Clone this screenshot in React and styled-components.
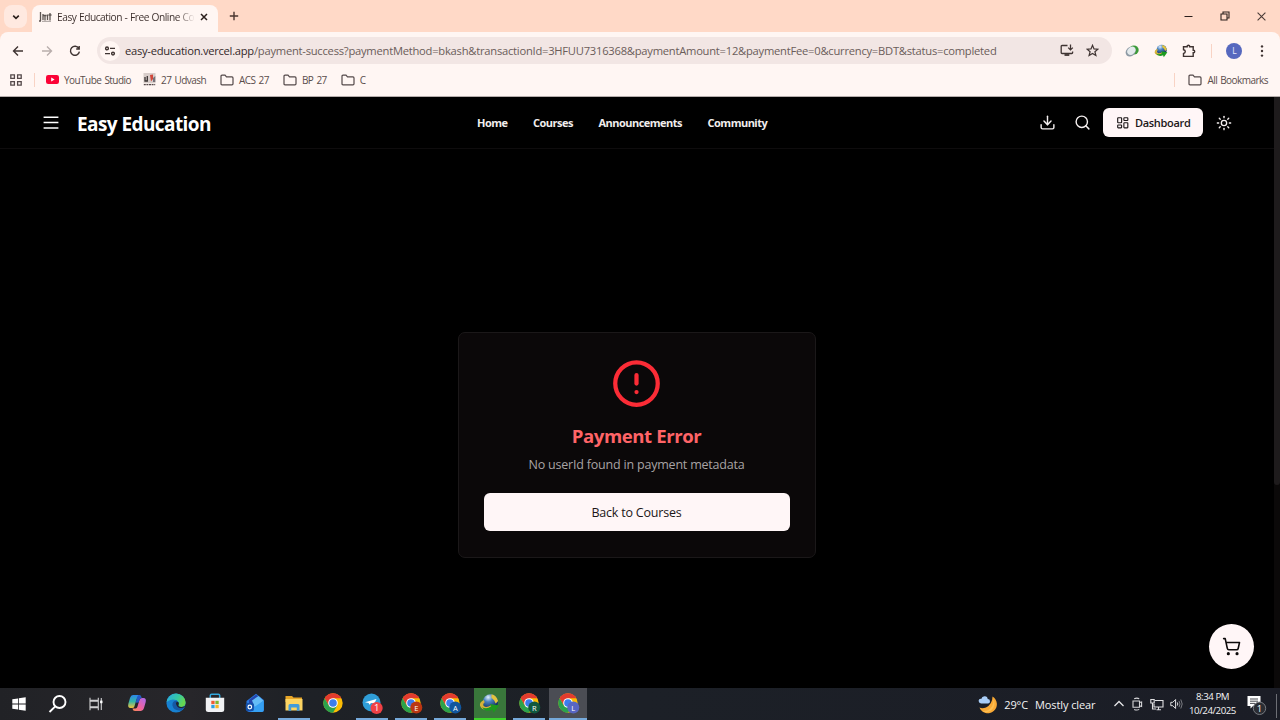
import React from "react";
import styled, { createGlobalStyle, css } from "styled-components";
import { Download, Search, LayoutDashboard, Sun, ShoppingCart, CircleAlert } from "lucide-react";

const Global = createGlobalStyle`
  * { box-sizing: border-box; }
  html, body { margin: 0; padding: 0; overflow: hidden; background: #000; }
  body { font-family: "Open Sans", "Noto Sans", sans-serif; }
  svg { display: block; flex: none; }
  button { font: inherit; border: 0; padding: 0; background: none; }
`;

const Screen = styled.div`
  width: 1280px;
  height: 720px;
  display: flex;
  flex-direction: column;
`;

/* ---------- Browser window ---------- */
const TabStrip = styled.div`
  height: 32px;
  flex: none;
  display: flex;
  align-items: flex-end;
  background: #ffd9c7;
`;
const TabSearch = styled.button`
  width: 23px;
  height: 23px;
  margin: 0 5px 4px 4px;
  border-radius: 8px;
  background: #ffe9e0;
  display: grid;
  place-items: center;
`;
const Tab = styled.div`
  width: 186px;
  height: 27px;
  padding: 0 9px 3px 6px;
  display: flex;
  align-items: center;
  border-radius: 8px 8px 0 0;
  background: #fff6f3;
`;
const TabTitle = styled.div`
  width: 138px;
  margin: 0 5px;
  white-space: nowrap;
  font-size: 10.2px;
  letter-spacing: -0.47px;
  word-spacing: 0.4px;
  line-height: 16px;
  background: linear-gradient(90deg, #3a2d2a 120px, #3a2d2a00 138px);
  background-clip: text;
  color: transparent;
`;
const NewTab = styled.div`
  height: 32px;
  padding-left: 11px;
  display: flex;
  align-items: center;
`;
const WindowControls = styled.div`
  height: 32px;
  margin-left: auto;
  padding-right: 14px;
  display: flex;
  align-items: center;
  gap: 27px;
`;
const ToolbarBack = styled.div`
  background: #ffd9c7;
`;
const Toolbar = styled.div`
  height: 37px;
  padding: 0 13px 0 12px;
  display: flex;
  align-items: center;
  background: #fff6f3;
  border-radius: 8px 8px 0 0;
`;
const NavButtons = styled.div`
  width: 85px;
  display: flex;
  gap: 16.5px;
`;
const Omnibox = styled.div`
  width: 1015px;
  height: 27px;
  padding: 0 13px 0 3px;
  display: flex;
  align-items: center;
  border-radius: 14px;
  background: #f2e6e4;
`;
const SiteInfo = styled.div`
  width: 20px;
  height: 20px;
  margin-right: 5px;
  border-radius: 50%;
  display: grid;
  place-items: center;
  background: #fff6f3;
`;
const Url = styled.div`
  flex: 1;
  white-space: nowrap;
  font-size: 11.2px;
  letter-spacing: -0.24px;
  color: #6b5d5a;
`;
const Domain = styled.span`
  color: #33282a;
  letter-spacing: -0.27px;
`;
const OmniActions = styled.div`
  display: flex;
  gap: 12px;
`;
const Extensions = styled.div`
  flex: 1;
  display: flex;
  align-items: center;
  justify-content: space-between;
  padding-left: 13px;
`;
const Divider = styled.span`
  flex: none;
  width: 1px;
  height: 14px;
  background: #f8d3c4;
`;
const Avatar = styled.div`
  width: 16px;
  height: 16px;
  border-radius: 50%;
  display: grid;
  place-items: center;
  background: #5668be;
  color: #e6e9ff;
  font-size: 8.5px;
  line-height: 16px;
`;
const BookmarksBar = styled.div`
  height: 28px;
  padding: 0 12px 6px 10px;
  display: flex;
  align-items: center;
  background: #fff6f3;
  border-bottom: 1px solid #b5adab;
`;
const Bookmark = styled.div`
  display: flex;
  align-items: center;
  gap: 5px;
  margin-right: ${(p) => p.$after || 0}px;
  font-size: 10px;
  line-height: 14px;
  letter-spacing: -0.54px;
  word-spacing: 1px;
  white-space: nowrap;
  color: #5a4d4b;
`;
const AppsShortcut = styled.div`
  display: flex;
  align-items: center;
  gap: 12px;
  margin-right: 11px;
`;
const AllBookmarks = styled.div`
  margin-left: auto;
  display: flex;
  align-items: center;
  gap: 13px;
`;

/* ---------- Site ---------- */
const Viewport = styled.div`
  flex: 1;
  display: flex;
  min-height: 0;
  background: #000;
`;
const Page = styled.div`
  position: relative;
  flex: 1;
  display: flex;
  flex-direction: column;
`;
const ScrollTrack = styled.div`
  width: 6px;
  background: #0b0909;
`;
const ScrollThumb = styled.div`
  width: 6px;
  height: 388px;
  background: #1e1b1c;
  border-radius: 0 0 3px 3px;
`;
const Header = styled.header`
  height: 52px;
  flex: none;
  padding: 0 42px 0 43px;
  display: flex;
  align-items: center;
  color: #fff;
  border-bottom: 1px solid #0e0c0d;
`;
const Brand = styled.div`
  width: 434px;
  display: flex;
  align-items: center;
  gap: 18px;
`;
const Logo = styled.h1`
  margin: 2px 0 0;
  font-size: 19px;
  font-weight: 700;
  line-height: 24px;
  letter-spacing: -0.58px;
`;
const Nav = styled.nav`
  display: flex;
  gap: 25.6px;
`;
const NavLink = styled.a`
  font-size: 11px;
  font-weight: 700;
  letter-spacing: -0.52px;
  line-height: 16px;
  color: #f1eded;
`;
const HeaderActions = styled.div`
  margin-left: auto;
  display: flex;
  align-items: center;
  gap: 18px;
  color: #f5f0f0;
`;
const DashboardButton = styled.button`
  width: 100px;
  height: 29px;
  margin: 0 -5px 0 -6px;
  display: flex;
  align-items: center;
  justify-content: center;
  gap: 6px;
  border-radius: 6px;
  background: #fff6f7;
  color: #1c1718;
  font-size: 11px;
  font-weight: 600;
  letter-spacing: -0.33px;
`;
const Main = styled.main`
  flex: 1;
  display: flex;
  justify-content: center;
  align-items: flex-start;
  padding: 183px 1px 0 0;
`;
const Card = styled.section`
  width: 358px;
  height: 226px;
  padding: 25px 25px;
  display: flex;
  flex-direction: column;
  align-items: center;
  border: 1px solid #1b1819;
  border-radius: 7px;
  background: #0b0809;
`;
const CardTitle = styled.h2`
  margin: 14px 0 0;
  font-size: 18.6px;
  font-weight: 700;
  line-height: 26px;
  letter-spacing: -0.42px;
  color: #ff6467;
`;
const CardText = styled.p`
  margin: 7px 0 0;
  font-size: 12.5px;
  line-height: 18px;
  letter-spacing: -0.2px;
  color: #a8a3a4;
`;
const CardButton = styled.button`
  width: 100%;
  height: 38px;
  margin-top: 19px;
  border-radius: 6px;
  background: #fff6f7;
  color: #1c1718;
  font-size: 12.5px;
  letter-spacing: -0.2px;
`;
const CartButton = styled.button`
  position: absolute;
  right: 20px;
  bottom: 19px;
  width: 45px;
  height: 45px;
  border-radius: 50%;
  display: grid;
  place-items: center;
  background: #fff6f7;
  color: #0c090a;
`;

/* ---------- Taskbar ---------- */
const Taskbar = styled.footer`
  height: 32px;
  flex: none;
  display: flex;
  background: linear-gradient(90deg, #212226 0, #27262a 190px, #1e2126 300px, #1c2027 640px, #1b1d26 1280px);
  color: #f3f3f3;
`;
const SystemButton = styled.div`
  width: 38.4px;
  display: grid;
  place-items: center;
`;
const TaskList = styled.div`
  display: flex;
  margin-left: 2.2px;
`;
const TaskSlot = styled.div`
  width: 39.2px;
  display: flex;
  justify-content: center;
`;
const AppTile = styled.div`
  width: 32px;
  display: grid;
  place-items: center;
  border-bottom: 2px solid transparent;
  ${(p) => p.$state === "open" && css`border-color: #76a9da;`}
  ${(p) => p.$state === "active" && css`
    width: 38px;
    flex: none;
    background: #4b4d54;
    border-color: #76a9da;
  `}
  ${(p) => p.$state === "busy" && css`
    background: #39773b;
    border-color: #3fd32c;
  `}
`;
const Tray = styled.div`
  margin-left: auto;
  display: flex;
  align-items: center;
`;
const Weather = styled.div`
  display: flex;
  align-items: center;
  gap: 7px;
  margin-right: 17px;
  font-size: 11px;
  letter-spacing: -0.1px;
`;
const TrayIcons = styled.div`
  display: flex;
  align-items: center;
  gap: 6.5px;
  margin-right: 6px;
`;
const Clock = styled.div`
  width: 47px;
  display: flex;
  flex-direction: column;
  align-items: center;
  font-size: 9.7px;
  line-height: 14px;
  letter-spacing: -0.45px;
  white-space: nowrap;
`;
const Notifications = styled.div`
  margin: 3px 0 0 11px;
  width: 33px;
`;

/* ---------- Drawings ---------- */
const Stroke = ({ w = 16, h = w, vb = `0 0 ${w} ${h}`, c = "#3f3432", sw = 1.4, children }) => (
  <svg width={w} height={h} viewBox={vb} fill="none" stroke={c} strokeWidth={sw}>{children}</svg>
);
const FolderIcon = () => (
  <Stroke w={14} h={12} c="#54494a" sw={1.2}>
    <path d="M1 2.2Q1 1.2 2 1.2H5L6.5 2.9H12Q13 2.9 13 3.9V9.8Q13 10.8 12 10.8H2Q1 10.8 1 9.8Z" />
  </Stroke>
);
const ChromeIcon = ({ badge, color }) => (
  <svg width="24" height="24" viewBox="0 0 24 24">
    <circle cx="12" cy="12" r="9.7" fill="#fbbc05" />
    <path d="M3.6 7.15A9.7 9.7 0 0 1 20.4 7.15H12L7.8 14.4Z" fill="#e33b2e" />
    <path d="M3.6 7.15L7.8 14.4 12 16.8 16.2 14.4 12 21.7A9.7 9.7 0 0 1 3.6 7.15Z" fill="#2ba24c" />
    <circle cx="12" cy="12" r="4.8" fill="#fff" />
    <circle cx="12" cy="12" r="3.8" fill="#3b7ded" />
    {badge && (
      <>
        <circle cx="17.3" cy="16.6" r="6" fill={color} />
        <text x="17.3" y="19.5" fontSize="7.5" textAnchor="middle" fill="#fff">{badge}</text>
      </>
    )}
  </svg>
);
const CopilotIcon = () => (
  <svg width="20" height="20" viewBox="0 0 20 20">
    <defs>
      <linearGradient id="cpA" x1="0" y1="0" x2="0" y2="1">
        <stop offset="0" stopColor="#2b87ea" /><stop offset=".5" stopColor="#35b6a6" /><stop offset="1" stopColor="#f4c33a" />
      </linearGradient>
      <linearGradient id="cpB" x1="1" y1="0" x2="0" y2="1">
        <stop offset="0" stopColor="#a86af0" /><stop offset=".55" stopColor="#ed62a0" /><stop offset="1" stopColor="#fb8d4e" />
      </linearGradient>
    </defs>
    <path d="M6 2H12Q14 2 14.6 4.6H11.5Q10 4.6 9.5 6.5L7.4 13.5Q7 15 5 15H3.5Q.5 15 1.3 11L3 5Q3.8 2 6 2Z" fill="url(#cpA)" />
    <path d="M14 18H8Q6 18 5.4 15.4H8.5Q10 15.4 10.5 13.5L12.6 6.5Q13 5 15 5H16.5Q19.5 5 18.7 9L17 15Q16.2 18 14 18Z" fill="url(#cpB)" />
    <path d="M12 2Q14 2 14.6 4.9Q12.9 5 12.6 6.5L11.7 9.5 8.5 9.7 9.5 6.5Q10.3 2 12 2Z" fill="#2457c5" />
  </svg>
);
const EdgeIcon = () => (
  <svg width="20" height="20" viewBox="0 0 20 20">
    <defs>
      <linearGradient id="edT" x1="0" y1="0" x2="1" y2=".4">
        <stop offset="0" stopColor="#2aa8e8" /><stop offset=".6" stopColor="#35c9a5" /><stop offset="1" stopColor="#67d64f" />
      </linearGradient>
    </defs>
    <circle cx="10" cy="10" r="9.6" fill="#1781d1" />
    <path d="M.5 9A9.6 9.6 0 0 1 19.6 9.3Q19.7 14 15 14 11.5 14 12.5 11.8 13.5 9.5 11 7.6 6 4.6.5 9Z" fill="url(#edT)" />
    <path d="M6.4 12.5Q6 8 10.6 7.4 13.5 9.3 12.5 11.6 11.4 14 15 14.2L18.6 13.5Q17.5 16 15.5 17.2 8 18.5 6.4 12.5Z" fill="#1558a5" />
    <path d="M9.9 9.9Q10.7 8.5 12.4 9.2 13.2 10.4 12.4 12 12 13.8 15.2 14.1 17.4 14 19 12.9L18.7 14.3Q10.8 17 9.9 9.9Z" fill="#202329" />
  </svg>
);
const StoreIcon = () => (
  <svg width="20" height="20" viewBox="0 0 20 20">
    <path d="M5.3 6V2.5Q5.3 1.2 6.6 1.2H13.4Q14.7 1.2 14.7 2.5V6" fill="none" stroke="#32a8dd" strokeWidth="1.5" />
    <path d="M.8 4.7H19.2V16.5Q19.2 19 16.7 19H3.3Q.8 19 .8 16.5Z" fill="#f1f2f4" />
    <path d="M6.3 7.8H9.6V11.1H6.3Z" fill="#ef5b32" /><path d="M10.4 7.8H13.7V11.1H10.4Z" fill="#7eb72e" />
    <path d="M6.3 11.9H9.6V15.2H6.3Z" fill="#2c9fe1" /><path d="M10.4 11.9H13.7V15.2H10.4Z" fill="#f9b420" />
  </svg>
);
const OutlookIcon = () => (
  <svg width="20" height="20" viewBox="0 0 20 20">
    <path d="M1.5 8L11 .8 18.8 7V17Q18.8 19 16.8 19H4.5Q1.5 19 1.5 16Z" fill="#2877df" />
    <path d="M4 7L11 1.8 17 6.2 9 13 4 10Z" fill="#2445ad" />
    <path d="M7 7.5L13.5 3 18.5 7.8 10 15Z" fill="#65bdf7" />
    <path d="M18.8 7.5V17Q18.8 19 16.8 19H6L10 13.6Z" fill="#36a0f2" />
    <rect x=".8" y="10" width="8" height="8" rx="1.6" fill="#1450a8" />
    <circle cx="4.8" cy="14" r="1.8" fill="none" stroke="#fff" strokeWidth="1.2" />
  </svg>
);
const ExplorerIcon = () => (
  <svg width="18" height="18" viewBox="0 0 18 18">
    <path d="M.5 2H7L8.5 3.5H17V8H.5Z" fill="#e7a527" />
    <path d="M.5 5H17.5V16.5H.5Z" fill="#fcd462" />
    <path d="M3.5 16.8V11.5Q3.5 10 5 10H13Q14.5 10 14.5 11.5V16.8H11.8V13.5H6.2V16.8Z" fill="#419bdb" />
  </svg>
);
const TelegramIcon = () => (
  <svg width="24" height="24" viewBox="0 0 24 24">
    <circle cx="11.5" cy="11.5" r="9" fill="#2f9ed8" />
    <path d="M5 11.2L16.5 8 14.5 12.2 11 12 9.4 13.8 8.6 12Z" fill="#fff" />
    <circle cx="16.6" cy="17" r="6.1" fill="#f04145" />
    <text x="16.6" y="20.3" fontSize="9.5" textAnchor="middle" fill="#fff">1</text>
  </svg>
);
const DownloadManagerIcon = ({ size }) => (
  <svg width={size} height={size} viewBox="0 0 22 22">
    <defs>
      <radialGradient id="glb" cx=".35" cy=".2" r=".75">
        <stop offset="0" stopColor="#e3f0fb" /><stop offset=".4" stopColor="#4a82bf" /><stop offset="1" stopColor="#122f60" />
      </radialGradient>
    </defs>
    <circle cx="12" cy="9.3" r="8" fill="url(#glb)" />
    <path d="M13 1.4Q18.5 2.4 20 8.5L17.5 11 15.8 7.5 13 5Z" fill="#e3c43d" />
    <path d="M5 7.3Q.4 9.8 1 13.2 2.3 17.8 8.5 17.6 12 17.4 14.5 15.5L12.8 12.8Q8 15.6 5.2 14 3.2 12 6 9.6Z" fill="#d7b23a" />
    <path d="M3.2 14.8Q8 17.4 12.8 14L11.3 11.4 21 13 15.4 20.8 14.3 17.5Q7 20.8 3.2 14.8Z" fill="#1c9a1e" />
  </svg>
);

const systemIcons = [
  <svg width="14" height="14" viewBox="0 0 14 14" fill="#fff">
    <path d="M.3 2.2L6 1.4V6.6H.3ZM6.8 1.3L13.7.3V6.6H6.8ZM.3 7.4H6V12.6L.3 11.8ZM6.8 7.4H13.7V13.7L6.8 12.7Z" />
  </svg>,
  <Stroke w={20} c="#fff" sw={1.9}><circle cx="11.5" cy="8" r="6" /><path d="M7.3 12.4L1.5 18" /></Stroke>,
  <Stroke w={14} c="#cfcfd1" sw={1.1}>
    <path d="M1 .8V3.2H9.3V.8M1 13.2V10.8H9.3V13.2M1 4.2H9.3V9.8H1ZM12.3 1V13" />
    <path d="M12.3 3.6V6.2" stroke="#fff" strokeWidth="2.4" />
  </Stroke>,
];
const apps = [
  { icon: <CopilotIcon /> },
  { icon: <EdgeIcon /> },
  { icon: <StoreIcon /> },
  { icon: <OutlookIcon /> },
  { icon: <ExplorerIcon />, state: "open" },
  { icon: <ChromeIcon /> },
  { icon: <TelegramIcon />, state: "open" },
  { icon: <ChromeIcon badge="E" color="#bb3612" />, state: "open" },
  { icon: <ChromeIcon badge="A" color="#11569e" />, state: "open" },
  { icon: <DownloadManagerIcon size={21} />, state: "busy" },
  { icon: <ChromeIcon badge="R" color="#11583f" />, state: "open" },
  { icon: <ChromeIcon badge="L" color="#5866c2" />, state: "active" },
];

function Browser() {
  return (
    <>
      <TabStrip>
        <TabSearch>
          <Stroke w={8} c="#2b1f1c" sw={1.6}><path d="M1.2 2.6L4 5.4 6.8 2.6" /></Stroke>
        </TabSearch>
        <Tab>
          <svg width="14" height="12" viewBox="0 0 14 12" fill="none" stroke="#5d5552">
            <path d="M2.5 1V10M1 10H3M5 3V9M7 4V9.5M5 4.5H8.5M9.5 3.5V9M12 2V9.5M10.5 4H13.5" strokeWidth="1.3" />
            <path d="M4 10.3H13" stroke="#a39b98" />
          </svg>
          <TabTitle>Easy Education - Free Online Co</TabTitle>
          <Stroke w={8} c="#2b1f1c" sw={1.5}><path d="M1 1L7 7M7 1L1 7" /></Stroke>
        </Tab>
        <NewTab>
          <Stroke w={10} c="#4a3630" sw={1.4}><path d="M5 .8V9.2M.8 5H9.2" /></Stroke>
        </NewTab>
        <WindowControls>
          <Stroke w={9} c="#2b1f1c" sw={1}><path d="M.5 4.5H8.5" /></Stroke>
          <Stroke w={10} c="#2b1f1c" sw={1.1}><path d="M1 3H7V9H1ZM3 3V1H9V7H7" /></Stroke>
          <Stroke w={9} c="#4a3b37" sw={1.1}><path d="M.6.6L8.4 8.4M8.4.6L.6 8.4" /></Stroke>
        </WindowControls>
      </TabStrip>
      <ToolbarBack>
        <Toolbar>
          <NavButtons>
            <Stroke w={12}><path d="M11 6H1.7M6 1.5L1.5 6 6 10.5" /></Stroke>
            <Stroke w={12} c="#b9aeac"><path d="M1 6H10.3M6 1.5L10.5 6 6 10.5" /></Stroke>
            <Stroke w={12}><path d="M9.8 3.4A4.5 4.5 0 1 0 10.4 6.6M10.2 1V4H7.2" /></Stroke>
          </NavButtons>
          <Omnibox>
            <SiteInfo>
              <Stroke w={12} h={10} sw={1.4}>
                <circle cx="3" cy="2.4" r="1.4" /><path d="M6 2.4H11M1 7.6H6" /><circle cx="9" cy="7.6" r="1.4" />
              </Stroke>
            </SiteInfo>
            <Url>
              <Domain>easy-education.vercel.app</Domain>
              /payment-success?paymentMethod=bkash&amp;transactionId=3HFUU7316368&amp;paymentAmount=12&amp;paymentFee=0&amp;currency=BDT&amp;status=completed
            </Url>
            <OmniActions>
              <Stroke w={14} h={13} sw={1.3}>
                <path d="M7.5 1.5H2Q1.2 1.5 1.2 2.3V8.7Q1.2 9.5 2 9.5H11.8Q12.6 9.5 12.6 8.7V7.5M10.5.5V5.5M8.2 3.6L10.5 5.9 12.8 3.6" />
                <path d="M4.5 11H9.3" strokeWidth="1.8" />
              </Stroke>
              <Stroke w={13} sw={1.2}>
                <path d="M6.5 1.3L8 4.9 11.9 5.2 8.9 7.7 9.9 11.5 6.5 9.4 3.1 11.5 4.1 7.7 1.1 5.2 5 4.9Z" />
              </Stroke>
            </OmniActions>
          </Omnibox>
          <Extensions>
            <svg width="14" height="14" viewBox="0 0 14 14">
              <ellipse cx="8.9" cy="6" rx="4.8" ry="4.5" fill="#3c9a38" />
              <ellipse cx="5.6" cy="7.6" rx="5.4" ry="4.5" transform="rotate(-45 5.6 7.6)" fill="#8e9aa4" />
              <ellipse cx="6.4" cy="6.7" rx="4.6" ry="3.5" transform="rotate(-45 6.4 6.7)" fill="#e4eaec" />
            </svg>
            <DownloadManagerIcon size={14} />
            <Stroke w={14} sw={1.4}>
              <path d="M1.5 2.8H5.2V2.3Q5.2 1.2 6.4 1.2T7.6 2.3V2.8H11.2V6.3H11.6Q12.7 6.3 12.7 7.5T11.6 8.7H11.2V12.4H1.5V9.5Q3.3 9.2 3.3 7.6T1.5 5.7Z" />
            </Stroke>
            <Divider />
            <Avatar>L</Avatar>
            <svg width="10" height="14" viewBox="0 0 10 14" fill="#3f3432">
              <circle cx="5" cy="2.4" r="1.2" /><circle cx="5" cy="7" r="1.2" /><circle cx="5" cy="11.6" r="1.2" />
            </svg>
          </Extensions>
        </Toolbar>
      </ToolbarBack>
      <BookmarksBar>
        <AppsShortcut>
          <Stroke w={12} c="#54494a" sw={1.3}>
            <path d="M.8.8H4.4V4.4H.8ZM7.6.8H11.2V4.4H7.6ZM.8 7.6H4.4V11.2H.8ZM7.6 7.6H11.2V11.2H7.6Z" />
          </Stroke>
          <Divider />
        </AppsShortcut>
        <Bookmark $after={12}>
          <svg width="13" height="9" viewBox="0 0 13 9">
            <rect width="13" height="9" rx="2.2" fill="#fb0336" /><path d="M5.2 2.5L8.6 4.5 5.2 6.5Z" fill="#fff" />
          </svg>
          YouTube Studio
        </Bookmark>
        <Bookmark $after={14}>
          <svg width="13" height="13" viewBox="0 0 13 13">
            <rect x=".5" width="12" height="10.3" fill="#d8cdca" />
            <path d="M2 4V8H4.3V3" fill="none" stroke="#3b3433" strokeWidth="1.3" />
            <path d="M7 2L10 1.5V6L8 8.5Z" fill="#d1483b" />
            <path d="M10 5L12.3 3V9H10Z" fill="#76727a" />
            <path d="M.8 11.6H12.2" stroke="#55494a" strokeWidth="1.4" strokeDasharray="2 .6" />
          </svg>
          27 Udvash
        </Bookmark>
        <Bookmark $after={14}><FolderIcon />ACS 27</Bookmark>
        <Bookmark $after={14}><FolderIcon />BP 27</Bookmark>
        <Bookmark><FolderIcon />C</Bookmark>
        <AllBookmarks>
          <Divider />
          <Bookmark><FolderIcon />All Bookmarks</Bookmark>
        </AllBookmarks>
      </BookmarksBar>
    </>
  );
}

function Site() {
  return (
    <Viewport>
      <Page>
        <Header>
          <Brand>
            <Stroke w={16} h={14} c="#fff" sw={1.5}><path d="M.6 1.3H15.4M.6 6.6H15.4M.6 11.9H15.4" /></Stroke>
            <Logo>Easy Education</Logo>
          </Brand>
          <Nav>
            {["Home", "Courses", "Announcements", "Community"].map((name) => (
              <NavLink key={name}>{name}</NavLink>
            ))}
          </Nav>
          <HeaderActions>
            <Download size={17} />
            <Search size={17} />
            <DashboardButton><LayoutDashboard size={13.5} />Dashboard</DashboardButton>
            <Sun size={16} />
          </HeaderActions>
        </Header>
        <Main>
          <Card>
            <CircleAlert size={51} color="#fb2c36" />
            <CardTitle>Payment Error</CardTitle>
            <CardText>No userId found in payment metadata</CardText>
            <CardButton>Back to Courses</CardButton>
          </Card>
        </Main>
        <CartButton><ShoppingCart size={19} /></CartButton>
      </Page>
      <ScrollTrack><ScrollThumb /></ScrollTrack>
    </Viewport>
  );
}

function WindowsTaskbar() {
  return (
    <Taskbar>
      {systemIcons.map((icon, i) => <SystemButton key={i}>{icon}</SystemButton>)}
      <TaskList>
        {apps.map(({ icon, state }, i) => (
          <TaskSlot key={i}><AppTile $state={state}>{icon}</AppTile></TaskSlot>
        ))}
      </TaskList>
      <Tray>
        <Weather>
          <svg width="19" height="19" viewBox="0 0 19 19">
            <path d="M14.5 1.5A9 9 0 1 1 1.5 12.5Q4 14 8 12.5 14.5 9 14.5 1.5Z" fill="#f9a935" />
            <path d="M15.6 4Q18.5 11 13 15.5 8 18.5 4 16 11 16.5 14 11.5 15.8 8 15.6 4Z" fill="#fdbf52" />
            <path d="M3 8.4Q.4 8 .6 5.8T3.2 3.9Q4 1 6.8 1.2T9.7 4Q12 4 12 6.2T10 8.4Z" fill="#a9cdf6" />
          </svg>
          <span>29°C</span>
          <span>Mostly clear</span>
        </Weather>
        <TrayIcons>
          <Stroke w={12} c="#e5e5e7" sw={1.3}><path d="M1.5 8L6 3.5 10.5 8" /></Stroke>
          <Stroke w={12} h={14} c="#d5d5d8" sw={1.1}>
            <path d="M3.2 1.8Q6 .4 8.2 1.8M2 4H8.5V10.3H2ZM8.5 5.6L10.6 4.9V9.4L8.5 8.7M3.2 12.4Q6 13.7 8.2 12.4" />
          </Stroke>
          <Stroke w={14} h={13} c="#e0e0e2" sw={1.1}>
            <path d="M5 2.5H13V9H4V6M.8 1.5H4.2V5H.8ZM2.5 5V11H6M8.5 9V11.5M6.5 11.7H11" />
          </Stroke>
          <Stroke w={13} h={12} c="#e0e0e2" sw={1}>
            <path d="M.8 4.3H2.8L5.6 1.5V10.5L2.8 7.7H.8Z" />
            <path d="M7.3 4.4Q8.3 6 7.3 7.6" /><path d="M9 2.9Q11 6 9 9.1M10.8 1.5Q13.6 6 10.8 10.5" stroke="#7c7d83" />
          </Stroke>
        </TrayIcons>
        <Clock><span>8:34 PM</span><span>10/24/2025</span></Clock>
        <Notifications>
          <svg width="33" height="24" viewBox="0 0 33 24">
            <path d="M.5 2H13.5V12H6L3.5 14.5V12H.5Z" fill="#fff" />
            <path d="M3 5H11M3 7.2H11M3 9.4H8" stroke="#33363c" strokeWidth=".9" />
            <circle cx="12.5" cy="14.3" r="6.2" fill="#2b2d33" stroke="#777a80" strokeWidth="1" />
            <text x="12.5" y="17.7" fontSize="9.5" textAnchor="middle" fill="#fff">1</text>
            <path d="M29.5 0V24" stroke="#6d6f75" />
          </svg>
        </Notifications>
      </Tray>
    </Taskbar>
  );
}

export default function App() {
  return (
    <Screen>
      <Global />
      <Browser />
      <Site />
      <WindowsTaskbar />
    </Screen>
  );
}
